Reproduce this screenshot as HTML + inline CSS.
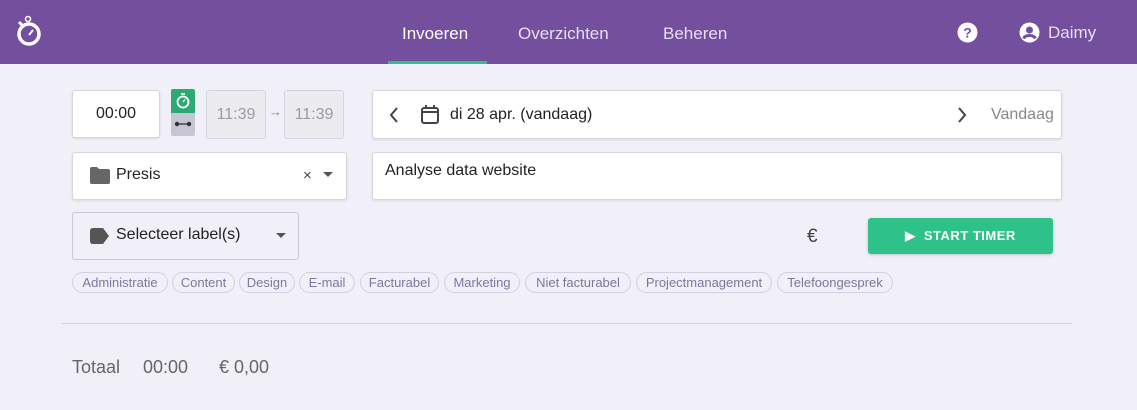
<!DOCTYPE html><html><head><style>
*{box-sizing:border-box;margin:0;padding:0}
body{width:1137px;height:410px;background:#f1f0f8;font-family:"Liberation Sans",sans-serif;position:relative;overflow:hidden;color:#333}
.a{position:absolute}
.hdr{left:0;top:0;width:1137px;height:64px;background:#734f9e}
.nav{color:#e6dff0;font-size:17px;top:24px}
.box{background:#fff;border:1px solid #d6d5de;border-radius:3px;box-shadow:0 1px 2px rgba(0,0,0,.1)}
.gray{background:#ececf0;border:1px solid #d6d5de;border-radius:3px;color:#9a9aa2;font-size:16px;text-align:center;line-height:48px}
.tag{top:272px;height:21px;border:1px solid #d3d0e0;border-radius:11px;font-size:13px;color:#7d76a0;line-height:19px;text-align:center}
</style></head><body>
<div class="a hdr"></div>
<svg class="a" style="left:15px;top:15px" width="28" height="32" viewBox="0 0 28 32"><circle cx="13" cy="4" r="2.5" fill="none" stroke="#fff" stroke-width="1.5"/><circle cx="14" cy="19" r="10" fill="none" stroke="#fff" stroke-width="3.5"/><line x1="14" y1="20" x2="18" y2="15" stroke="#fff" stroke-width="2"/><line x1="4" y1="7" x2="7" y2="10" stroke="#fff" stroke-width="3"/></svg>
<div class="a nav" style="left:402px;color:#fff">Invoeren</div>
<div class="a" style="left:388px;top:61px;width:99px;height:3px;background:#2ec28a"></div>
<div class="a nav" style="left:518px">Overzichten</div>
<div class="a nav" style="left:663px">Beheren</div>
<svg class="a" style="left:957px;top:22px" width="21" height="21"><circle cx="10.5" cy="10.5" r="10" fill="#fff"/><text x="10.5" y="15.5" font-size="14" font-weight="bold" text-anchor="middle" fill="#734f9e" font-family="Liberation Sans">?</text></svg>
<svg class="a" style="left:1019px;top:22px" width="21" height="21"><circle cx="10.5" cy="10.5" r="10" fill="#fff"/><circle cx="10.5" cy="8" r="3.5" fill="#734f9e"/><path d="M4.5 16.5c2-4 10-4 12 0" stroke="#734f9e" stroke-width="3" fill="none"/></svg>
<div class="a nav" style="left:1048px;top:23px">Daimy</div>

<div class="a box" style="left:72px;top:90px;width:88px;height:48px;font-size:16px;text-align:center;line-height:46px;color:#222">00:00</div>
<div class="a" style="left:171px;top:89px;width:24px;height:24px;background:#2daa72;border-radius:2px 2px 0 0"></div>
<svg class="a" style="left:175px;top:92px" width="16" height="18"><circle cx="8" cy="10" r="5.5" fill="none" stroke="#fff" stroke-width="1.8"/><line x1="6" y1="2" x2="10" y2="2" stroke="#fff" stroke-width="1.5"/><line x1="8" y1="10" x2="10" y2="7.5" stroke="#fff" stroke-width="1.3"/></svg>
<div class="a" style="left:171px;top:113px;width:24px;height:23px;background:#c6c5d3;border-radius:0 0 2px 2px"></div>
<svg class="a" style="left:174px;top:120px" width="18" height="8"><circle cx="3" cy="4" r="2.2" fill="#333"/><circle cx="15" cy="4" r="2.2" fill="#333"/><line x1="3" y1="4" x2="15" y2="4" stroke="#333" stroke-width="1.3"/></svg>
<div class="a gray" style="left:206px;top:90px;width:60px;height:49px">11:39</div>
<div class="a" style="left:269px;top:104px;color:#888;font-size:13px">→</div>
<div class="a gray" style="left:284px;top:90px;width:60px;height:49px">11:39</div>

<div class="a box" style="left:372px;top:90px;width:690px;height:49px"></div>
<svg class="a" style="left:388px;top:106px" width="12" height="18"><path d="M9 2L3 9l6 7" stroke="#444" stroke-width="2" fill="none"/></svg>
<svg class="a" style="left:420px;top:104px" width="20" height="21"><rect x="2" y="4" width="16" height="15" rx="2" fill="none" stroke="#444" stroke-width="2"/><line x1="2" y1="8" x2="18" y2="8" stroke="#444" stroke-width="2"/><line x1="6" y1="1" x2="6" y2="5" stroke="#444" stroke-width="2"/><line x1="14" y1="1" x2="14" y2="5" stroke="#444" stroke-width="2"/></svg>
<div class="a" style="left:450px;top:106px;font-size:16px;color:#222">di 28 apr. (vandaag)</div>
<svg class="a" style="left:956px;top:106px" width="12" height="18"><path d="M3 2l6 7-6 7" stroke="#444" stroke-width="2" fill="none"/></svg>
<div class="a" style="left:991px;top:106px;font-size:16px;color:#888">Vandaag</div>

<div class="a box" style="left:72px;top:152px;width:275px;height:48px"></div>
<svg class="a" style="left:90px;top:167px" width="20" height="17"><path d="M0 2q0-2 2-2h5l2 2h9q2 0 2 2v11q0 2-2 2H2q-2 0-2-2z" fill="#666"/></svg>
<div class="a" style="left:116px;top:166px;font-size:16px;color:#222">Presis</div>
<div class="a" style="left:303px;top:167px;font-size:15px;color:#444">×</div>
<svg class="a" style="left:323px;top:172px" width="10" height="6"><path d="M0 0h10L5 5z" fill="#555"/></svg>

<div class="a box" style="left:372px;top:152px;width:690px;height:48px"></div>
<div class="a" style="left:385px;top:162px;font-size:16px;color:#222">Analyse data website</div>

<div class="a" style="left:72px;top:212px;width:227px;height:48px;border:1px solid #c8c7d2;border-radius:3px"></div>
<svg class="a" style="left:90px;top:228px" width="20" height="16"><path d="M0 3q0-3 3-3h10l6 8-6 8H3q-3 0-3-3z" fill="#555"/></svg>
<div class="a" style="left:116px;top:226px;font-size:16px;color:#222">Selecteer label(s)</div>
<svg class="a" style="left:276px;top:233px" width="10" height="6"><path d="M0 0h10L5 5z" fill="#555"/></svg>

<div class="a" style="left:807px;top:226px;font-size:19px;color:#444">€</div>
<div class="a" style="left:868px;top:218px;width:185px;height:36px;background:#2ec28a;border-radius:3px;box-shadow:0 1px 3px rgba(0,0,0,.2);color:#fff;font-size:13px;font-weight:bold;line-height:36px;text-align:center;letter-spacing:.5px">▶&nbsp;&nbsp;START TIMER</div>

<div class="a tag" style="left:72px;width:96px">Administratie</div>
<div class="a tag" style="left:172px;width:63px">Content</div>
<div class="a tag" style="left:239px;width:56px">Design</div>
<div class="a tag" style="left:299px;width:56px">E-mail</div>
<div class="a tag" style="left:360px;width:79px">Facturabel</div>
<div class="a tag" style="left:444px;width:76px">Marketing</div>
<div class="a tag" style="left:525px;width:106px">Niet facturabel</div>
<div class="a tag" style="left:636px;width:136px">Projectmanagement</div>
<div class="a tag" style="left:777px;width:116px">Telefoongesprek</div>

<div class="a" style="left:62px;top:323px;width:1010px;height:1px;background:#d2d1da"></div>
<div class="a" style="left:72px;top:357px;font-size:18px;color:#666">Totaal</div>
<div class="a" style="left:143px;top:357px;font-size:18px;color:#666">00:00</div>
<div class="a" style="left:219px;top:357px;font-size:18px;color:#666">€ 0,00</div>
</body></html>
